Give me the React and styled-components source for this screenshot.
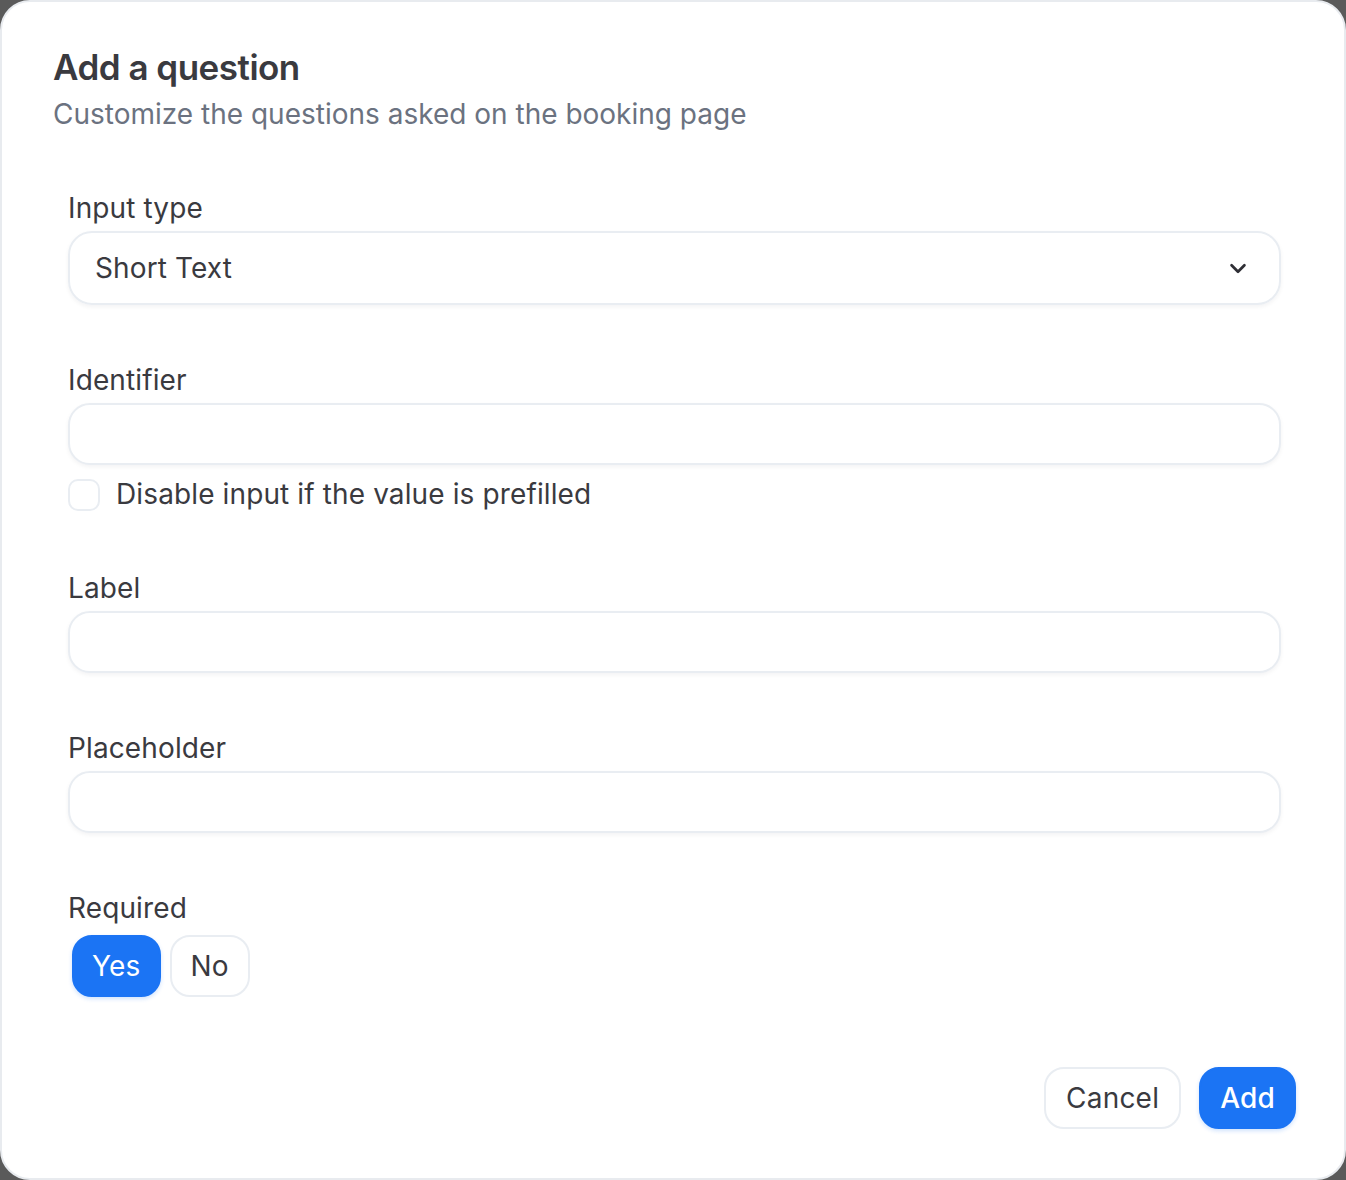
import React, { useState } from "react";
import styled, { createGlobalStyle } from "styled-components";

const GlobalStyle = createGlobalStyle`
  html, body {
    margin: 0;
    padding: 0;
    background: #5a5a5a;
  }
  body {
    font-family: Inter, "Noto Sans", "Liberation Sans", sans-serif;
    letter-spacing: 0.12px;
    -webkit-font-smoothing: antialiased;
  }
  * {
    box-sizing: border-box;
  }
`;

const Modal = styled.div`
  width: 1346px;
  height: 1180px;
  background: #ffffff;
  border: 2px solid #e8ebef;
  border-radius: 30px;
  padding: 43px 48px 0 51px;
  display: flex;
  flex-direction: column;
`;

const Title = styled.h2`
  margin: 0;
  font-size: 35px;
  line-height: 44px;
  font-weight: 600;
  color: #3a3a3f;
  letter-spacing: -0.5px;
`;

const Subtitle = styled.p`
  margin: 5px 0 0;
  font-size: 28px;
  line-height: 40px;
  color: #6b7280;
  letter-spacing: 0;
`;

const Form = styled.div`
  display: flex;
  flex-direction: column;
  gap: 55px;
  padding: 54px 15px 0 15px;
`;

const Field = styled.div`
  display: flex;
  flex-direction: column;
`;

const Label = styled.label`
  font-size: 28px;
  line-height: 40px;
  color: #3a3a3f;
  margin-bottom: ${(p) => (p.$loose ? "7px" : "3px")};
`;

const SelectBox = styled.div`
  height: 74px;
  border: 2px solid #e9edf2;
  border-radius: 24px;
  box-shadow: 0 2px 4px rgba(16, 24, 40, 0.05);
  display: flex;
  align-items: center;
  justify-content: space-between;
  padding: 0 30px 0 25px;
  font-size: 28px;
  color: #3a3a3f;
`;

const TextInput = styled.input`
  height: 62px;
  border: 2px solid #e9edf2;
  border-radius: 22px;
  box-shadow: 0 2px 4px rgba(16, 24, 40, 0.05);
  padding: 0 24px;
  font-family: inherit;
  font-size: 28px;
  color: #3a3a3f;
  outline: none;
  background: #fff;
`;

const CheckRow = styled.label`
  display: flex;
  align-items: center;
  gap: 16px;
  margin-top: 11px;
  font-size: 28px;
  line-height: 37px;
  color: #3a3a3f;
`;

const Checkbox = styled.span`
  width: 32px;
  height: 32px;
  border: 2px solid #e9edf2;
  border-radius: 10px;
  background: ${(p) => (p.$checked ? "#1b74f4" : "#fff")};
`;

const Toggle = styled.div`
  display: flex;
  gap: 9px;
  padding-left: 4px;
`;

const Pill = styled.button`
  height: 62px;
  min-width: 80px;
  padding: 0 ${(p) => p.$pad || 18}px;
  border-radius: 20px;
  font-family: inherit;
  font-size: 28px;
  letter-spacing: 0.2px;
  cursor: pointer;
  border: 2px solid ${(p) => (p.$primary ? "#1b74f4" : "#e9edf2")};
  background: ${(p) => (p.$primary ? "#1b74f4" : "#fff")};
  color: ${(p) => (p.$primary ? "#fff" : "#3a3a3f")};
  font-weight: ${(p) => (p.$bold ? 500 : 400)};
  box-shadow: ${(p) => (p.$primary ? "0 2px 4px rgba(27, 116, 244, 0.2)" : "none")};
`;

const Footer = styled.div`
  display: flex;
  justify-content: flex-end;
  gap: 18px;
  margin-top: 70px;
`;

function Chevron() {
  return (
    <svg width="22" height="22" viewBox="0 0 24 24" fill="none" stroke="#2f2f35" strokeWidth="3" strokeLinecap="round" strokeLinejoin="round">
      <path d="M5 9l7 7 7-7" />
    </svg>
  );
}

export default function App() {
  const [required, setRequired] = useState(true);
  const [disabled, setDisabled] = useState(false);

  return (
    <>
      <GlobalStyle />
      <Modal>
        <Title>Add a question</Title>
        <Subtitle>Customize the questions asked on the booking page</Subtitle>

        <Form>
          <Field>
            <Label>Input type</Label>
            <SelectBox>
              <span>Short Text</span>
              <Chevron />
            </SelectBox>
          </Field>

          <Field>
            <Label>Identifier</Label>
            <TextInput />
            <CheckRow onClick={() => setDisabled(!disabled)}>
              <Checkbox $checked={disabled} />
              Disable input if the value is prefilled
            </CheckRow>
          </Field>

          <Field>
            <Label>Label</Label>
            <TextInput />
          </Field>

          <Field>
            <Label>Placeholder</Label>
            <TextInput />
          </Field>

          <Field>
            <Label $loose>Required</Label>
            <Toggle>
              <Pill $primary={required} onClick={() => setRequired(true)}>
                Yes
              </Pill>
              <Pill $primary={!required} onClick={() => setRequired(false)}>
                No
              </Pill>
            </Toggle>
          </Field>
        </Form>

        <Footer>
          <Pill $pad={20}>Cancel</Pill>
          <Pill $primary $bold $pad={19}>
            Add
          </Pill>
        </Footer>
      </Modal>
    </>
  );
}
